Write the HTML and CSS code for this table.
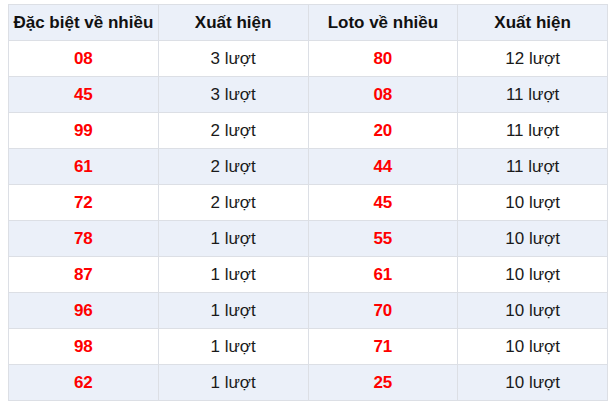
FILE: index.html
```html
<!DOCTYPE html>
<html lang="vi">
<head>
<meta charset="utf-8">
<link rel="stylesheet" href="styles.css">
</head>
<body>
<table class="stats">
  <thead>
    <tr><th>Đặc biệt về nhiều</th><th>Xuất hiện</th><th>Loto về nhiều</th><th>Xuất hiện</th></tr>
  </thead>
  <tbody>
    <tr><td class="num">08</td><td>3 lượt</td><td class="num">80</td><td>12 lượt</td></tr>
    <tr><td class="num">45</td><td>3 lượt</td><td class="num">08</td><td>11 lượt</td></tr>
    <tr><td class="num">99</td><td>2 lượt</td><td class="num">20</td><td>11 lượt</td></tr>
    <tr><td class="num">61</td><td>2 lượt</td><td class="num">44</td><td>11 lượt</td></tr>
    <tr><td class="num">72</td><td>2 lượt</td><td class="num">45</td><td>10 lượt</td></tr>
    <tr><td class="num">78</td><td>1 lượt</td><td class="num">55</td><td>10 lượt</td></tr>
    <tr><td class="num">87</td><td>1 lượt</td><td class="num">61</td><td>10 lượt</td></tr>
    <tr><td class="num">96</td><td>1 lượt</td><td class="num">70</td><td>10 lượt</td></tr>
    <tr><td class="num">98</td><td>1 lượt</td><td class="num">71</td><td>10 lượt</td></tr>
    <tr><td class="num">62</td><td>1 lượt</td><td class="num">25</td><td>10 lượt</td></tr>
  </tbody>
</table>
</body>
</html>
```
FILE: styles.css
```css
html, body {
  margin: 0;
  padding: 0;
  background: #fff;
}
body {
  padding: 4px 8px;
  font-family: "Liberation Sans", Arial, sans-serif;
  font-size: 17px;
  color: #1a1a1a;
}
.stats {
  border-collapse: collapse;
  table-layout: fixed;
  width: 600px;
}
.stats th, .stats td {
  width: 25%;
  height: 35px;
  padding: 0;
  border: 1px solid #dcdfe5;
  text-align: center;
  vertical-align: middle;
  white-space: nowrap;
}
.stats th {
  background: #ebf0f9;
  font-weight: bold;
  color: #111;
}
.stats tbody tr:nth-child(even) td {
  background: #ebf0f9;
}
.stats td.num {
  color: #ff0000;
  font-weight: bold;
}
```
